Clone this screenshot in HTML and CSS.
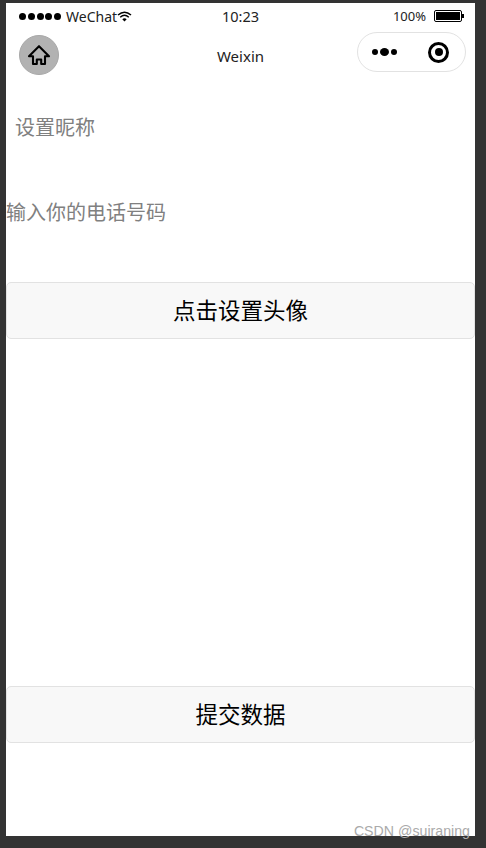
FILE: index.html
```html
<!DOCTYPE html>
<html lang="zh-CN">
<head>
    <meta charset="UTF-8">
    <meta name="viewport" content="width=device-width, initial-scale=1.0">
    <title>Weixin</title>
    <link rel="stylesheet" href="styles.css">
</head>
<body>
    <div class="phone">
        <div class="status-bar">
            <div class="status-left">
                <span class="signal"><i></i><i></i><i></i><i></i><i></i></span>
                <span>WeChat</span>
                <svg class="wifi" width="15" height="11" viewBox="0 0 15 11">
                    <path d="M1 4 Q7.5 -1.5 14 4" fill="none" stroke="#000" stroke-width="1.5"/>
                    <path d="M3.2 6.2 Q7.5 2.4 11.8 6.2" fill="none" stroke="#000" stroke-width="1.5"/>
                    <path d="M5.3 8.2 Q7.5 6.2 9.7 8.2 L7.5 10.6 Z" fill="#000"/>
                </svg>
            </div>
            <div class="status-time">10:23</div>
            <div class="status-right">
                <span>100%</span>
                <span class="battery"><span class="battery-level"></span></span>
                <span class="battery-tip"></span>
            </div>
        </div>

        <div class="nav-bar">
            <div class="home-btn">
                <svg width="24" height="24" viewBox="0 0 24 24">
                    <path d="M12 3.2 L22 13.2 H18 V21 H14.2 V16.5 H9.8 V21 H6 V13.2 H2 Z" fill="none" stroke="#000" stroke-width="2.1" stroke-linejoin="round"/>
                </svg>
            </div>
            <div class="nav-title">Weixin</div>
            <div class="capsule">
                <span class="dots"><i></i><i class="big"></i><i></i></span>
                <span class="record"><i></i></span>
            </div>
        </div>

        <div class="content">
            <div class="field nickname">设置昵称</div>
            <div class="field phone-number">输入你的电话号码</div>
            <button class="btn avatar-btn">点击设置头像</button>
            <button class="btn submit-btn">提交数据</button>
        </div>

        <div class="watermark">CSDN @suiraning</div>
    </div>
</body>
</html>
```

FILE: styles.css
```css
* {
    margin: 0;
    padding: 0;
    box-sizing: border-box;
    font-family: "Noto Sans", "Noto Sans CJK SC", sans-serif;
}

html, body {
    height: 100%;
    overflow: hidden;
}

body {
    background: #333;
    padding: 3px 11px 12px 6px;
}

.phone {
    position: relative;
    height: 833px;
    background: #fff;
    color: #000;
}

.status-bar {
    display: grid;
    grid-template-columns: 1fr auto 1fr;
    align-items: center;
    height: 26px;
    padding: 0 11px 0 13px;
    font-size: 13px;
    color: #222;
}

.status-left {
    display: flex;
    align-items: center;
    gap: 5px;
    font-size: 14px;
}

.signal {
    display: flex;
    gap: 1.75px;
}

.signal i {
    width: 7px;
    height: 7px;
    border-radius: 50%;
    background: #000;
}

.wifi {
    margin-left: -5px;
}

.status-time {
    font-size: 14.5px;
    margin-right: 2px;
}

.status-right {
    display: flex;
    align-items: center;
    justify-content: flex-end;
}

.battery {
    width: 28px;
    height: 12px;
    margin-left: 8px;
    padding: 1px;
    border: 1px solid #000;
    border-radius: 2px;
}

.battery-level {
    display: block;
    height: 100%;
    background: #000;
}

.battery-tip {
    width: 2px;
    height: 4px;
    background: #000;
}

.nav-bar {
    display: flex;
    align-items: center;
    justify-content: space-between;
    height: 46px;
    padding: 3px 9px 0 13px;
    position: relative;
}

.home-btn {
    display: flex;
    align-items: center;
    justify-content: center;
    width: 40px;
    height: 40px;
    margin-top: 3px;
    background: #b2b2b2;
    border: 1px solid #a8a8a8;
    border-radius: 50%;
}

.nav-title {
    position: absolute;
    left: 0;
    right: 0;
    top: 17px;
    text-align: center;
    font-size: 15px;
    color: #222;
}

.capsule {
    display: flex;
    align-items: center;
    justify-content: space-between;
    width: 109px;
    height: 40px;
    margin-bottom: 3px;
    padding: 0 16px 0 14px;
    border: 1px solid #e2e2e2;
    border-radius: 20px;
}

.dots {
    display: flex;
    align-items: center;
    gap: 2px;
}

.dots i {
    width: 6px;
    height: 6px;
    border-radius: 50%;
    background: #000;
}

.dots i.big {
    width: 9px;
    height: 8px;
}

.record {
    display: flex;
    align-items: center;
    justify-content: center;
    width: 21px;
    height: 21px;
    border: 3px solid #000;
    border-radius: 50%;
}

.record i {
    width: 8px;
    height: 8px;
    border-radius: 50%;
    background: #000;
}

.content {
    display: flex;
    flex-direction: column;
}

.field {
    font-size: 20px;
    line-height: 28px;
    color: #808080;
}

.nickname {
    margin-top: 39px;
    padding-left: 9px;
}

.phone-number {
    margin-top: 57px;
}

.btn {
    display: block;
    width: 100%;
    height: 57px;
    padding-bottom: 2px;
    background: #f8f8f8;
    border: 1px solid #e2e2e2;
    border-radius: 5px;
    font-size: 22.5px;
    color: #000;
}

.avatar-btn {
    margin-top: 55px;
}

.submit-btn {
    margin-top: 347px;
}

.watermark {
    position: absolute;
    right: 5px;
    bottom: -3px;
    font-family: "Liberation Sans", sans-serif;
    font-size: 14.2px;
    color: #aaa;
}
```
